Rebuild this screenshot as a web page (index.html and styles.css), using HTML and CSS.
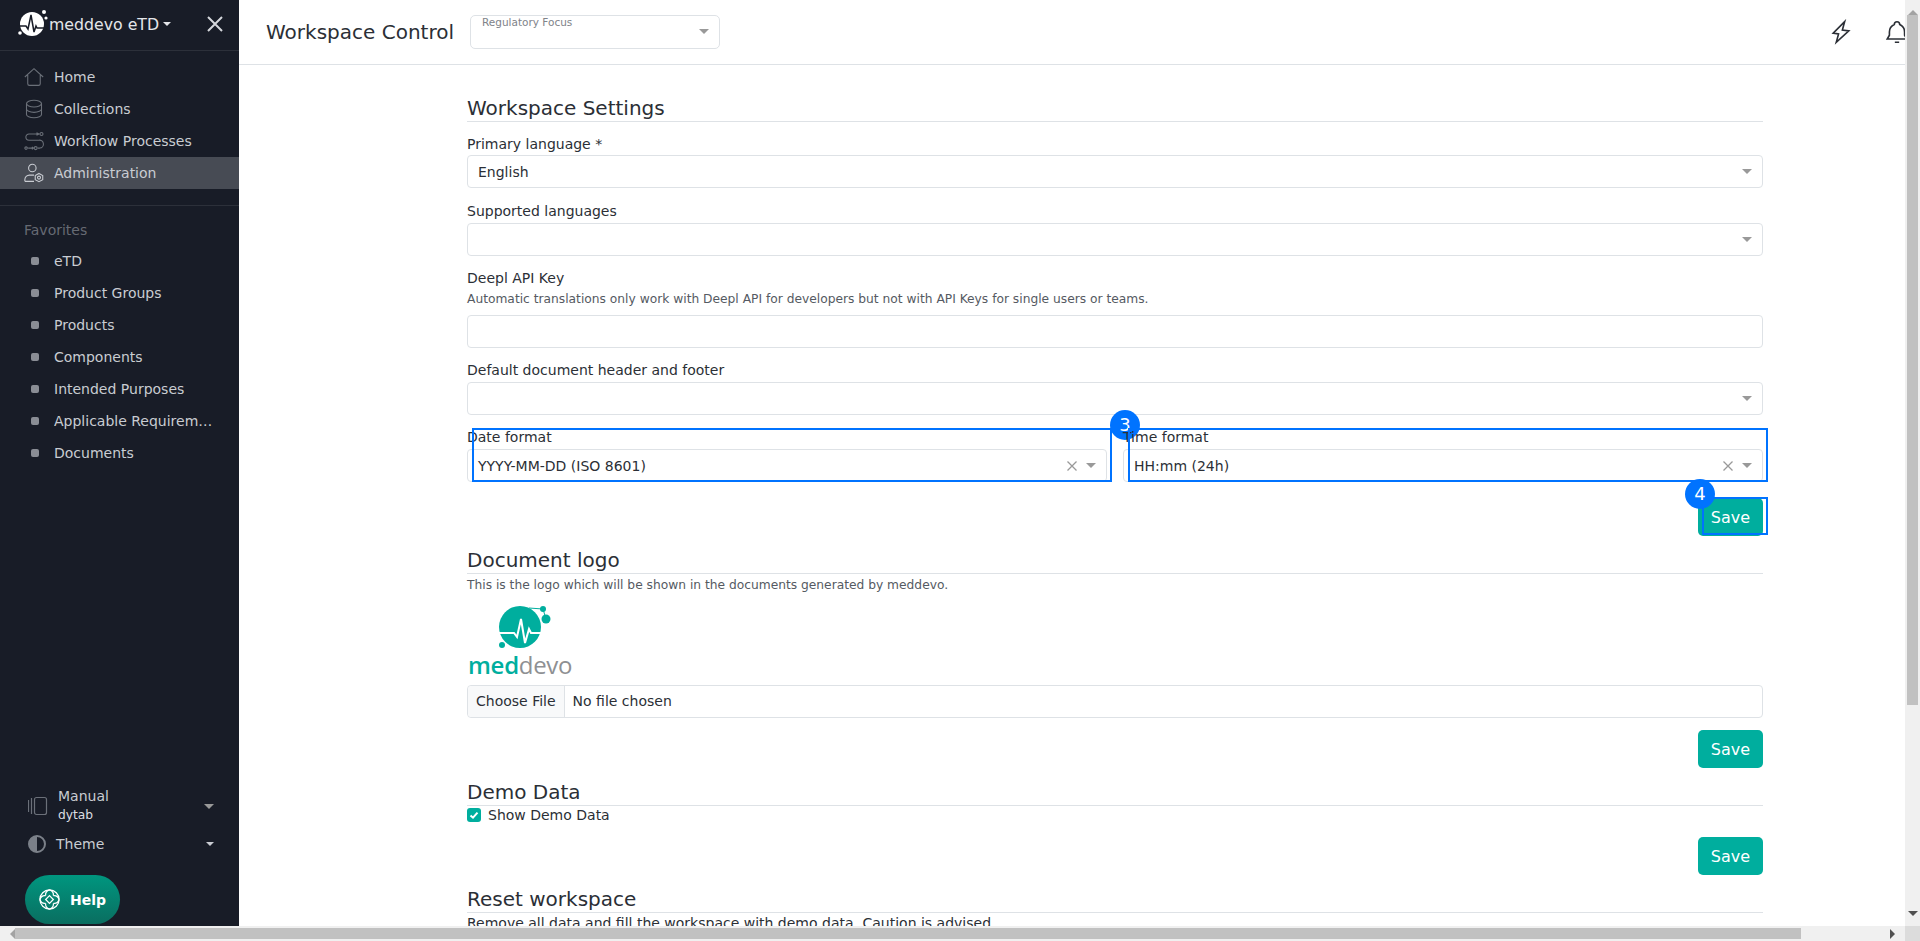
FILE: index.html
```html
<!DOCTYPE html>
<html lang="en">
<head>
  <meta charset="UTF-8">
  <title>meddevo eTD - Workspace Control</title>
  <link rel="stylesheet" href="styles.css">
</head>
<body>

  <div class="window">
    <aside class="sidebar">
      <div class="brand">
        <svg class="brand-logo" viewBox="0 0 34 30" width="34" height="30">
          <circle cx="14" cy="15" r="12" fill="#fff"/>
          <circle cx="26" cy="3" r="2" fill="#fff"/>
          <circle cx="28" cy="9" r="1.600" fill="#fff"/>
          <circle cx="2" cy="24" r="1.800" fill="#fff"/>
          <path d="M1 17h7l2 3 3-14 3 17 2-6 1 2h11" fill="none" stroke="#181c27" stroke-width="1.500"/>
        </svg>
        <span class="brand-name">meddevo eTD</span>
        <span class="caret caret-white"></span>
        <svg class="brand-close" viewBox="0 0 18 18" width="18" height="18">
          <path d="M2 2l14 14M16 2L2 16" stroke="#d5d7dc" stroke-width="2" fill="none"/>
        </svg>
      </div>

      <nav class="nav-main">
        <a class="nav-item">
          <svg class="nav-icon" viewBox="0 0 24 24"><path d="M1 12L12 2l11 10M4.500 9.500V20a2 2 0 0 0 2 2h11a2 2 0 0 0 2-2V9.500"/></svg>
          Home
        </a>
        <a class="nav-item">
          <svg class="nav-icon" viewBox="0 0 24 24"><ellipse cx="12" cy="5.500" rx="9" ry="4"/><path d="M3 5.500v13c0 2.200 4 4 9 4s9-1.800 9-4v-13M3 12c0 2.200 4 4 9 4s9-1.800 9-4"/></svg>
          Collections
        </a>
        <a class="nav-item">
          <svg class="nav-icon" viewBox="0 0 24 24"><circle cx="21" cy="3.500" r="1.800"/><circle cx="2.500" cy="20.500" r="1.500"/><circle cx="14" cy="20.500" r="1.800"/><path d="M18 3.500H6a3.500 3.500 0 0 0 0 7.500h12a4.500 4.500 0 0 1 1 9.500h-2.500M5 20.500h6.500M9.500 19l2 1.500-2 1.500M15 2l3 1.500L15 5"/></svg>
          Workflow Processes
        </a>
        <a class="nav-item nav-active">
          <svg class="nav-icon nav-icon-light" viewBox="0 0 24 24"><circle cx="10" cy="6" r="4.500"/><path d="M1 22v-2a5.500 5.500 0 0 1 5.500-5.500H12M1 22h11"/><path d="M18 12.500l4.500 2.500v5L18 22.500 13.500 20v-5z"/><circle cx="18" cy="17.500" r="1.800"/></svg>
          Administration
        </a>
      </nav>

      <div class="fav-title">Favorites</div>
      <nav class="nav-fav">
        <a class="fav-item"><span class="fav-dot"></span>eTD</a>
        <a class="fav-item"><span class="fav-dot"></span>Product Groups</a>
        <a class="fav-item"><span class="fav-dot"></span>Products</a>
        <a class="fav-item"><span class="fav-dot"></span>Components</a>
        <a class="fav-item"><span class="fav-dot"></span>Intended Purposes</a>
        <a class="fav-item"><span class="fav-dot"></span><span class="fav-cut">Applicable Requirements</span></a>
        <a class="fav-item"><span class="fav-dot"></span>Documents</a>
      </nav>

      <div class="side-bottom">
        <div class="manual-row">
          <svg class="manual-icon" viewBox="0 0 20 20" width="20" height="20">
            <rect x="6.500" y="1.500" width="12" height="17" rx="2"/>
            <path d="M3.500 2v16M0.500 4v12"/>
          </svg>
          <div class="manual-text">
            <div>Manual</div>
            <div class="manual-sub">dytab</div>
          </div>
          <span class="caret caret-grey"></span>
        </div>
        <div class="theme-row">
          <svg viewBox="0 0 20 20" width="20" height="20">
            <circle cx="10" cy="10" r="8" fill="none" stroke="#7b8089" stroke-width="2"/>
            <path d="M10 2a8 8 0 0 0 0 16z" fill="#7b8089"/>
          </svg>
          <span class="theme-text">Theme</span>
          <span class="caret caret-light"></span>
        </div>
        <button class="help-btn">
          <svg viewBox="0 0 24 24" width="23" height="23">
            <circle cx="12" cy="12" r="10"/>
            <path d="M12 8l4 4-4 4-4-4zM12 2c-3 1-4.500 3-4 6M12 2c3 1 4.500 3 4 6M22 12c-1-3-3-4.500-6-4M22 12c-1 3-3 4.500-6 4M12 22c3-1 4.500-3 4-6M12 22c-3-1-4.500-3-4-6M2 12c1 3 3 4.500 6 4M2 12c1-3 3-4.500 6-4"/>
          </svg>
          Help
        </button>
      </div>
    </aside>

    <main class="main">
      <header class="topbar">
        <h1 class="page-title">Workspace Control</h1>
        <div class="focus-select">
          <span class="focus-label">Regulatory Focus</span>
          <span class="caret caret-grey"></span>
        </div>
        <div class="top-icons">
          <svg class="top-icon" viewBox="0 0 24 24"><path d="M14 2L5 14h5l-1 8 10-12h-6z" transform="rotate(8 12 12)"/></svg>
          <svg class="top-icon" viewBox="0 0 24 24"><path d="M9.500 5a2.500 2.500 0 0 1 5 0c3 1.300 4.500 4 4.500 7v3l2 3.500H3L5 15v-3c0-3 1.500-5.700 4.500-7zM10 21.500h4"/></svg>
        </div>
      </header>

      <div class="content">
        <h2 class="section-title">Workspace Settings</h2>

        <label class="field-label">Primary language *</label>
        <div class="select select-first"><span>English</span><span class="caret caret-grey"></span></div>

        <label class="field-label">Supported languages</label>
        <div class="select"><span class="caret caret-grey"></span></div>

        <label class="field-label">Deepl API Key</label>
        <div class="field-help help-key">Automatic translations only work with Deepl API for developers but not with API Keys for single users or teams.</div>
        <div class="select"></div>

        <label class="field-label">Default document header and footer</label>
        <div class="select"><span class="caret caret-grey"></span></div>

        <div class="two-cols">
          <div class="col">
            <label class="field-label">Date format</label>
            <div class="select">
              <span>YYYY-MM-DD (ISO 8601)</span>
              <svg class="clear" viewBox="0 0 10 10" width="10" height="10"><path d="M0.500 0.500l9 9M9.500 0.500l-9 9"/></svg>
              <span class="caret caret-grey"></span>
            </div>
            <div class="mark mark-col"></div>
            <span class="badge badge-three">3</span>
          </div>
          <div class="col">
            <label class="field-label">Time format</label>
            <div class="select">
              <span>HH:mm (24h)</span>
              <svg class="clear" viewBox="0 0 10 10" width="10" height="10"><path d="M0.500 0.500l9 9M9.500 0.500l-9 9"/></svg>
              <span class="caret caret-grey"></span>
            </div>
            <div class="mark mark-col"></div>
          </div>
        </div>

        <div class="actions">
          <button class="save-btn">Save
            <span class="mark mark-save"></span>
            <span class="badge badge-four">4</span>
          </button>
        </div>

        <h2 class="section-title section-logo">Document logo</h2>
        <div class="field-help help-logo">This is the logo which will be shown in the documents generated by meddevo.</div>
        <div class="doc-logo">
          <svg class="doc-logo-mark" viewBox="0 0 70 50" width="70" height="50">
            <circle cx="37" cy="23" r="21" fill="#00ae9e"/>
            <circle cx="60" cy="5" r="3" fill="#00ae9e"/>
            <path d="M46 4l14 1 3 10" fill="none" stroke="#00ae9e" stroke-width="1"/>
            <circle cx="63" cy="15" r="4.500" fill="#00ae9e"/>
            <circle cx="19" cy="41" r="3" fill="#00ae9e"/>
            <path d="M13 29h18l3 4 4-18 4 24 4-14 2 4h24" fill="none" stroke="#fff" stroke-width="2"/>
          </svg>
          <div class="doc-logo-text"><b>med</b>devo</div>
        </div>
        <div class="file-input">
          <span class="file-btn">Choose File</span>
          <span class="file-name">No file chosen</span>
        </div>
        <div class="actions actions-file"><button class="save-btn">Save</button></div>

        <h2 class="section-title section-demo">Demo Data</h2>
        <div class="check-row">
          <span class="check-box">
            <svg viewBox="0 0 14 14" width="14" height="14"><path d="M3.500 7.500l2.500 2.200 4.500-5" fill="none" stroke="#fff" stroke-width="2"/></svg>
          </span>
          Show Demo Data
        </div>
        <div class="actions actions-demo"><button class="save-btn">Save</button></div>

        <h2 class="section-title section-reset">Reset workspace</h2>
        <p class="reset-text">Remove all data and fill the workspace with demo data. Caution is advised.</p>
      </div>
    </main>

    <div class="vscroll">
      <span class="arrow-up"></span>
      <div class="vthumb"></div>
      <span class="arrow-down"></span>
    </div>
  </div>

  <div class="hscroll">
    <span class="arrow-left"></span>
    <div class="hthumb"></div>
    <span class="arrow-right"></span>
    <div class="corner"></div>
  </div>

</body>
</html>
```

FILE: styles.css
```css
* {
  box-sizing: border-box;
}

body {
  font-family: "DejaVu Sans", sans-serif;
  font-size: 14px;
  color: #2b2f36;
  background: white;
  margin: 0;
  height: 100vh;
  overflow: hidden;
  display: flex;
  flex-direction: column;
}

.window {
  flex: 1;
  min-height: 0;
  display: flex;
}

/* sidebar */
.sidebar {
  width: 239px;
  flex-shrink: 0;
  background: #181c27;
  color: #c9ccd2;
  display: flex;
  flex-direction: column;
}

.brand {
  height: 51px;
  border-bottom: 1px solid #2c303a;
  display: flex;
  align-items: center;
  padding: 0 15px 2px 18px;
  color: #e4e6ea;
  font-size: 15.750px;
}

.brand-logo {
  flex-shrink: 0;
  margin-right: -3px;
}

.brand-name {
  margin-right: 4px;
}

.brand-close {
  margin-left: auto;
}

.caret {
  display: inline-block;
  width: 0;
  height: 0;
  border-left: 5px solid transparent;
  border-right: 5px solid transparent;
  border-top: 5px solid #999;
}

.caret-white {
  border-left-width: 4px;
  border-right-width: 4px;
  border-top: 4px solid #e4e6ea;
}

.caret-light {
  border-left-width: 4px;
  border-right-width: 4px;
  border-top: 4px solid #c9ccd2;
}

.nav-main {
  padding: 10px 0 16px;
  border-bottom: 1px solid #2c303a;
}

.nav-item {
  height: 32px;
  display: flex;
  align-items: center;
  gap: 10px;
  padding-left: 24px;
}

.nav-active {
  background: #474b54;
}

.nav-icon {
  width: 20px;
  height: 20px;
  fill: none;
  stroke: #6b7079;
  stroke-width: 1.300;
}

.nav-icon-light {
  stroke: #c9ccd2;
}

.fav-title {
  margin: 15px 0 6px 24px;
  height: 18px;
  line-height: 18px;
  color: #666a73;
}

.fav-item {
  height: 32px;
  display: flex;
  align-items: center;
  padding-left: 31px;
}

.fav-dot {
  width: 8px;
  height: 8px;
  border-radius: 2px;
  background: #8a8d95;
  margin-right: 15px;
  flex-shrink: 0;
}

.fav-cut {
  width: 160px;
  overflow: hidden;
  white-space: nowrap;
  text-overflow: ellipsis;
}

.side-bottom {
  margin-top: auto;
  padding: 0 24px 2px 25px;
}

.manual-row {
  display: flex;
  align-items: center;
  height: 40px;
  padding-left: 3px;
}

.manual-icon {
  fill: none;
  stroke: #6b7079;
  stroke-width: 1.200;
  flex-shrink: 0;
}

.manual-text {
  margin-left: 10px;
  font-size: 14px;
  line-height: 19px;
}

.manual-sub {
  font-size: 12.250px;
  color: #dcdee2;
}

.manual-row .caret {
  margin-left: auto;
  margin-right: 1px;
}

.theme-row {
  display: flex;
  align-items: center;
  height: 36px;
  padding-left: 2px;
}

.theme-text {
  margin-left: 9px;
}

.theme-row .caret {
  margin-left: auto;
  margin-right: 1px;
}

.help-btn {
  width: 95px;
  height: 49px;
  margin-top: 13px;
  border: none;
  border-radius: 25px;
  background: linear-gradient(#00967f, #0a6e60);
  color: white;
  font-family: inherit;
  font-size: 14px;
  font-weight: bold;
  display: flex;
  align-items: center;
  gap: 9px;
  padding: 0 0 0 13px;
}

.help-btn svg {
  fill: none;
  stroke: white;
  stroke-width: 1.300;
  flex-shrink: 0;
}

/* main */
.main {
  flex: 1;
  min-width: 0;
  overflow: hidden;
}

.topbar {
  height: 65px;
  border-bottom: 1px solid #dee2e6;
  display: flex;
  align-items: center;
  padding-left: 27px;
}

.page-title {
  margin: 0 16px 0 0;
  font-size: 20px;
  font-weight: normal;
  white-space: nowrap;
}

.focus-select {
  position: relative;
  width: 250px;
  height: 34px;
  border: 1px solid #dee2e6;
  border-radius: 5px;
}

.focus-label {
  position: absolute;
  left: 11px;
  top: 0;
  font-size: 10.500px;
  color: #808389;
}

.focus-select .caret {
  position: absolute;
  right: 10px;
  top: 13px;
}

.top-icons {
  margin-left: auto;
  display: flex;
  gap: 30px;
  margin-right: -5px;
}

.top-icon {
  width: 26px;
  height: 26px;
  fill: none;
  stroke: #2b2f36;
  stroke-width: 1.500;
}

.content {
  padding: 0 142px 0 228px;
}

.section-title {
  margin: 30px 0 0;
  padding-top: 1px;
  font-size: 20px;
  font-weight: normal;
  line-height: 25px;
  border-bottom: 1px solid #dee2e6;
}

.field-label {
  display: block;
  margin-top: 12px;
  line-height: 20px;
}

.field-help {
  font-size: 12.250px;
  line-height: 18px;
  color: #555a62;
  margin-top: 2px;
}

.help-key {
  margin-bottom: 7px;
}

.select {
  height: 33px;
  margin-top: 2px;
  border: 1px solid #dee2e6;
  border-radius: 4px;
  display: flex;
  align-items: center;
  padding: 0 10px;
}

.select-first {
  margin-top: 1px;
  margin-bottom: 13px;
}

.select .caret {
  margin-left: auto;
}

.clear {
  margin-left: auto;
  margin-right: 9px;
  fill: none;
  stroke: #999;
  stroke-width: 1.300;
}

.clear + .caret {
  margin-left: 0;
}

.two-cols {
  display: grid;
  grid-template-columns: 1fr 1fr;
  gap: 16px;
}

.col {
  position: relative;
}

.mark {
  position: absolute;
  border: 2px solid #0073ff;
  pointer-events: none;
}

.mark-col {
  left: 5px;
  right: -5px;
  top: 13px;
  bottom: 0;
}

.badge {
  position: absolute;
  width: 30px;
  height: 30px;
  border-radius: 50%;
  background: #0073ff;
  color: white;
  font-size: 18px;
  line-height: 30px;
  text-align: center;
}

.badge-three {
  right: -33px;
  top: -5px;
}

.actions {
  display: flex;
  justify-content: flex-end;
  margin-top: 16px;
}

.actions-file {
  margin-top: 12px;
}

.save-btn {
  position: relative;
  width: 65px;
  height: 38px;
  border: none;
  border-radius: 5px;
  background: #00ae9e;
  color: white;
  font-family: inherit;
  font-size: 16px;
  padding: 0;
}

.mark-save {
  left: 4px;
  right: -5px;
  top: -1px;
  bottom: 1px;
}

.badge-four {
  left: -13px;
  top: -19px;
}

.section-logo {
  margin-top: 11px;
}

.doc-logo {
  width: 105px;
  height: 71px;
  margin-top: 10px;
}

.doc-logo-mark {
  display: block;
  margin-left: 16px;
}

.doc-logo-text {
  font-family: "Open Sans", sans-serif;
  font-size: 24px;
  line-height: 21px;
  color: #8e9093;
  letter-spacing: -0.300px;
  margin-left: 1px;
}

.doc-logo-text b {
  color: #00ae9e;
  font-weight: 600;
}

.file-input {
  height: 33px;
  margin-top: 10px;
  border: 1px solid #dee2e6;
  border-radius: 4px;
  display: flex;
  align-items: stretch;
  line-height: 31px;
}

.file-btn {
  background: #f8f9fa;
  border-right: 1px solid #dee2e6;
  padding: 0 8px;
  border-radius: 4px 0 0 4px;
}

.file-name {
  padding-left: 8px;
}

.section-demo {
  margin-top: 11px;
}

.check-row {
  display: flex;
  align-items: center;
  gap: 7px;
  line-height: 18px;
}

.check-box {
  width: 14px;
  height: 14px;
  border-radius: 3px;
  background: #00ae9e;
  display: flex;
}

.actions-demo {
  margin-top: 13px;
}

.section-reset {
  margin-top: 11px;
}

.reset-text {
  margin: 0;
  line-height: 20px;
}

/* scrollbars */
.vscroll {
  width: 15px;
  flex-shrink: 0;
  background: #f0f0f0;
  display: flex;
  flex-direction: column;
  align-items: center;
  justify-content: space-between;
}

.vthumb {
  width: 11px;
  height: 690px;
  margin-bottom: auto;
  background: #c1c1c1;
}

.arrow-up {
  width: 0;
  height: 15px;
  border-left: 5px solid transparent;
  border-right: 5px solid transparent;
  border-bottom: 5px solid #a3a3a3;
  border-top: 5px solid transparent;
}

.arrow-down {
  width: 0;
  height: 15px;
  border-left: 5px solid transparent;
  border-right: 5px solid transparent;
  border-top: 5px solid #505050;
  border-bottom: 5px solid transparent;
}

.hscroll {
  height: 15px;
  flex-shrink: 0;
  background: #f0f0f0;
  display: flex;
  align-items: center;
}

.hthumb {
  width: 1786px;
  height: 11px;
  background: #c1c1c1;
}

.arrow-left {
  width: 15px;
  height: 0;
  border-top: 5px solid transparent;
  border-bottom: 5px solid transparent;
  border-right: 5px solid #a3a3a3;
  border-left: 5px solid transparent;
}

.arrow-right {
  width: 15px;
  height: 0;
  margin-left: auto;
  border-top: 5px solid transparent;
  border-bottom: 5px solid transparent;
  border-left: 5px solid #505050;
  border-right: 5px solid transparent;
}

.corner {
  width: 15px;
  height: 15px;
  background: #dcdcdc;
}
```
